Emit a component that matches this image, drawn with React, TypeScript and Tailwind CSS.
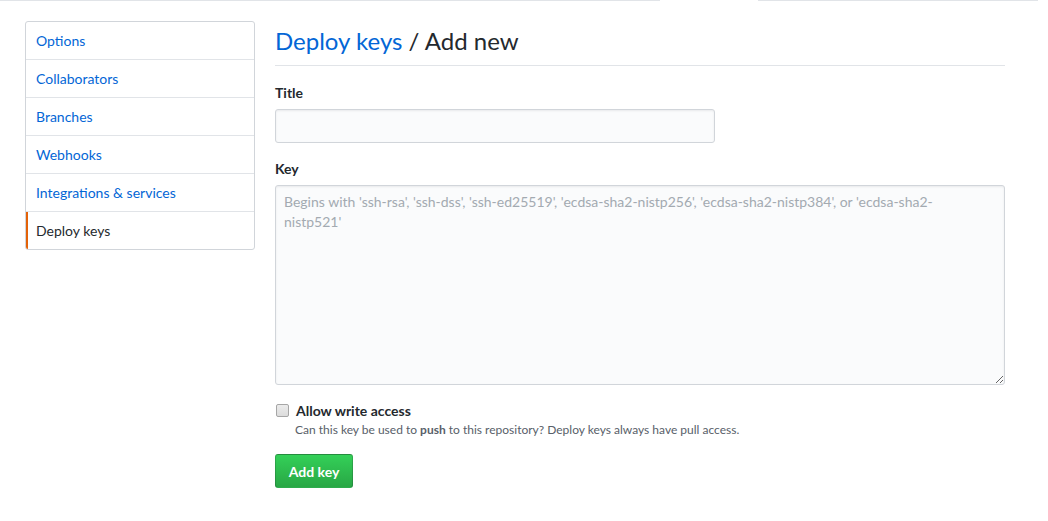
import React from "react";

const font = { fontFamily: 'Lato, "Noto Sans", "Liberation Sans", sans-serif' };

export default function App() {
  const items = ["Options", "Collaborators", "Branches", "Webhooks", "Integrations & services"];
  return (
    <div className="min-h-[521px] bg-white text-[14px] text-[#24292e]" style={font}>
      <div className="flex h-px">
        <div className="w-[660px] bg-[#e1e4e8]" />
        <div className="w-[98px]" />
        <div className="w-[280px] bg-[#e1e4e8]" />
      </div>
      <div className="flex pl-[25px] pt-[20px]">
        <nav className="w-[230px] self-start overflow-hidden rounded-[3px] border border-[#d1d5da]">
          {items.map((it) => (
            <div key={it} className="flex h-[38px] items-center border-b border-[#e1e4e8] px-[10px] text-[#0366d6]">
              {it}
            </div>
          ))}
          <div className="flex h-[37px] items-center border-l-2 border-[#e36209] pl-[8px] text-[#24292e]">
            Deploy keys
          </div>
        </nav>
        <main className="ml-[20px] w-[730px]">
          <div className="border-b border-[#e1e4e8] pt-[2px] pb-[6px]">
            <h2 className="text-[24px] font-normal leading-[36px]">
              <span className="text-[#0366d6]">Deploy keys</span> / Add new
            </h2>
          </div>
          <div className="mt-[16px]">
            <label className="block text-[14px] font-bold leading-[21px]">Title</label>
            <input className="mt-[6px] block h-[34px] w-[440px] rounded-[3px] border border-[#d1d5da] bg-[#fafbfc] px-[8px] shadow-[inset_0_1px_2px_rgba(27,31,35,0.075)] outline-none" />
          </div>
          <div className="mt-[15px]">
            <label className="block text-[14px] font-bold leading-[21px]">Key</label>
            <textarea
              className="mt-[6px] block h-[200px] w-[730px] resize-y rounded-[3px] border border-[#d1d5da] bg-[#fafbfc] px-[8px] py-[6px] text-[14px] leading-[20px] shadow-[inset_0_1px_2px_rgba(27,31,35,0.075)] outline-none placeholder:text-[#a3aab1]"
              placeholder={"Begins with 'ssh-rsa', 'ssh-dss', 'ssh-ed25519', 'ecdsa-sha2-nistp256', 'ecdsa-sha2-nistp384', or 'ecdsa-sha2-\nnistp521'"}
            />
          </div>
          <div className="mt-[15px]">
            <label className="flex items-center leading-[21px]">
              <input
                type="checkbox"
                className="ml-px mr-[7px] h-[13px] w-[13px] appearance-none rounded-[2px] border border-[#a6a6a6] bg-gradient-to-b from-[#ececec] to-[#dcdcdc]"
              />
              <span className="font-bold">Allow write access</span>
            </label>
            <p className="pl-[20px] text-[12px] leading-[18px] text-[#586069]">
              Can this key be used to <strong className="font-bold">push</strong> to this repository? Deploy keys always have pull access.
            </p>
          </div>
          <button className="mt-[15px] h-[34px] w-[78px] rounded-[3px] border border-[rgba(27,31,35,0.2)] bg-gradient-to-b from-[#34d058] to-[#28a745] text-[14px] font-bold text-white">
            Add key
          </button>
        </main>
      </div>
    </div>
  );
}
